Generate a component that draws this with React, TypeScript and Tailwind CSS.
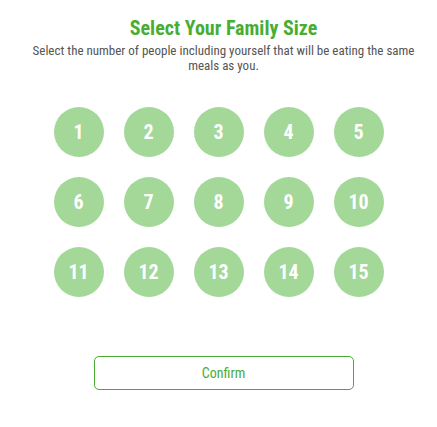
const SIZES = Array.from({ length: 15 }, (_, i) => i + 1);

export default function App() {
  return (
    <div
      className="w-[437px] h-[427px] bg-white flex flex-col items-center"
      style={{ fontFamily: '"Roboto Condensed", Roboto, "Liberation Sans", sans-serif' }}
    >
      {/* heading block sits a little right of the grid in the original */}
      <div className="pl-[10px] flex flex-col items-center">
        <h1 className="mt-[16px] text-[20px] leading-[24px] font-bold text-[#48ad32]">
          Select Your Family Size
        </h1>
        <p className="mt-[3px] w-[400px] text-center text-[13px] leading-[15px] text-[#555]">
          Select the number of people including yourself that will be eating the same meals as you.
        </p>
      </div>

      <div className="mt-[34px] grid grid-cols-5 gap-[20px]">
        {SIZES.map((n) => (
          <button
            key={n}
            className="w-[50px] h-[50px] rounded-full bg-[#a3d898] text-white text-[20px] font-bold flex items-center justify-center"
          >
            {n}
          </button>
        ))}
      </div>

      <div className="pl-[10px] mt-[59px]">
        <button className="w-[260px] h-[34px] rounded-[5px] border border-[#48ad32] text-[#48ad32] text-[14px]">
          Confirm
        </button>
      </div>
    </div>
  );
}
